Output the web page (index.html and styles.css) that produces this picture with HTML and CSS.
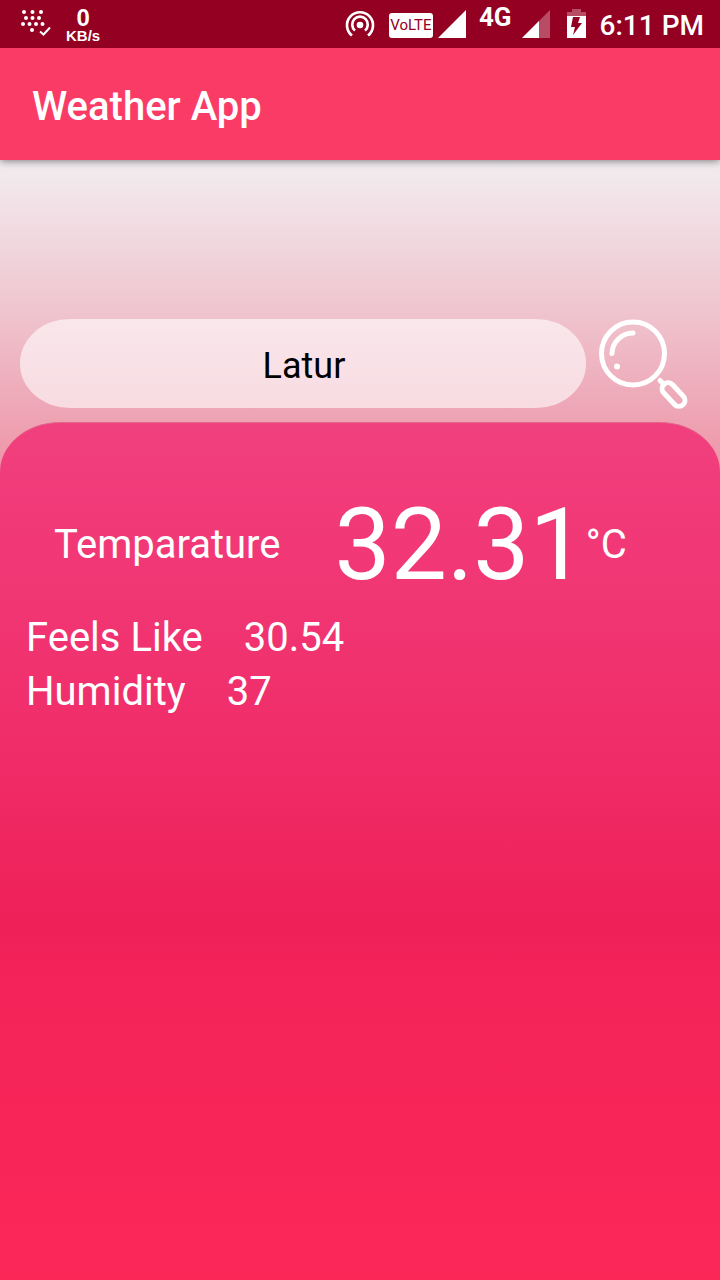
FILE: index.html
```html
<!DOCTYPE html>
<html lang="en">
<head>
<meta charset="utf-8">
<meta name="viewport" content="width=device-width, initial-scale=1">
<title>Weather App</title>
<link rel="stylesheet" href="styles.css">
</head>
<body>
<div class="status-bar">
  <div class="status-left">
    <svg class="icon" width="32" height="30" viewBox="0 0 32 30" aria-hidden="true">
      <g fill="#fff">
        <circle cx="4" cy="4" r="2"/><circle cx="12.500" cy="4" r="2"/><circle cx="21" cy="4" r="2"/>
        <circle cx="6" cy="10" r="2"/><circle cx="12.500" cy="10" r="2"/><circle cx="19" cy="10" r="2"/>
        <circle cx="3" cy="16" r="2"/><circle cx="9.500" cy="16" r="2"/><circle cx="16" cy="16" r="2"/><circle cx="22.500" cy="16" r="2"/>
        <circle cx="12" cy="22" r="2"/>
      </g>
      <path d="M20 23.500 23.500 26.500 30 19.500" fill="none" stroke="#fff" stroke-width="2"/>
    </svg>
    <div class="speed"><span class="speed-value">0</span><span class="speed-unit">KB/s</span></div>
  </div>
  <div class="status-right">
    <svg class="icon hotspot" width="30" height="28" viewBox="0 0 30 28" aria-hidden="true">
      <g fill="none" stroke="#fff" stroke-width="2.700">
        <path d="M7 25.500A13 13 0 1 1 23 25.500"/>
        <path d="M10 20.500A7.800 7.800 0 1 1 20 20.500"/>
      </g>
      <circle cx="15" cy="15" r="3.300" fill="#fff"/>
    </svg>
    <span class="volte">VoLTE</span>
    <svg class="icon signal" width="28" height="28" viewBox="0 0 28 28" aria-hidden="true"><path d="M0 28 28 0V28Z" fill="#fff"/></svg>
    <span class="network">4G</span>
    <svg class="icon signal" width="28" height="28" viewBox="0 0 28 28" aria-hidden="true"><path d="M0 28 28 0V28Z" fill="#b84c64"/><path d="M0 28 17 11V28Z" fill="#fff"/></svg>
    <svg class="icon battery" width="20" height="29" viewBox="0 0 20 29" aria-hidden="true"><path d="M5 0H14V3H19V7H0V3H5Z" fill="#b84c64"/><path d="M0 7H19V29H0Z" fill="#fff"/><path d="M6 8H13L11 14H15L6 26 8 18H4Z" fill="#930021"/></svg>
    <time class="clock">6:11 PM</time>
  </div>
</div>
<header class="app-bar"><h1 class="app-title">Weather App</h1></header>
<main class="content">
  <form class="search">
    <input class="search-input" type="text" value="Latur" aria-label="City">
    <button class="search-button" type="button" aria-label="Search">
      <svg width="92" height="92" viewBox="0 0 92 92" fill="none" stroke="#fff" stroke-width="5" stroke-linecap="round" aria-hidden="true">
        <circle cx="36" cy="36.500" r="31.500"/>
        <path d="M15 36.500A21 21 0 0 1 36 16"/>
        <circle cx="20" cy="49.500" r="3" fill="#fff" stroke="none"/>
        <path d="M63 63.500 67 67.500"/>
        <rect x="-6" y="-14" width="12" height="28" rx="6" transform="translate(76.500 77.500) rotate(-43)"/>
      </svg>
    </button>
  </form>
  <section class="card">
    <div class="temperature">
      <span class="label">Temparature</span>
      <span class="degrees">32.31</span>
      <span class="unit">°C</span>
    </div>
    <dl class="details">
      <div class="detail"><dt>Feels Like</dt><dd>30.54</dd></div>
      <div class="detail"><dt>Humidity</dt><dd>37</dd></div>
    </dl>
  </section>
</main>
</body>
</html>
```
FILE: styles.css
```css
* { box-sizing: border-box; }

body {
  margin: 0;
  min-height: 100vh;
  display: flex;
  flex-direction: column;
  font-family: Roboto, sans-serif;
  color: #fff;
}

svg { display: block; }

.status-bar {
  z-index: 2;
  display: flex;
  justify-content: space-between;
  height: 48px;
  padding: 0 16px 0 20px;
  background: #930021;
}

.status-left,
.status-right { display: flex; }

.status-left { gap: 14px; padding-top: 8px; }

.speed {
  display: flex;
  flex-direction: column;
  align-items: center;
  font-family: "Liberation Sans", sans-serif;
  font-weight: 700;
}

.speed-value { font-size: 24px; line-height: 20px; }

.speed-unit {
  font-size: 15px;
  line-height: 16px;
}

.status-right { align-items: flex-start; }
.hotspot { margin: 10px 14px 0 0; }

.volte {
  width: 44px;
  margin: 13px 5px 0 0;
  border-radius: 3px;
  background: #fff;
  color: #930021;
  font-size: 15px;
  line-height: 25px;
  text-align: center;
}

.signal { margin-top: 10px; }

.network {
  margin: 3px 10px 0 13px;
  font-size: 26px;
  line-height: 28px;
  font-weight: 700;
}

.battery { margin: 9px 13px 0 17px; }

.clock {
  margin-top: 9px;
  font-size: 28px;
  line-height: 34px;
  font-weight: 500;
}

.app-bar {
  z-index: 1;
  display: flex;
  align-items: center;
  height: 112px;
  padding: 6px 32px 0;
  background: #fa3b66;
  box-shadow: 0 1px 8px rgba(0, 0, 0, 0.5);
}

.app-title {
  margin: 0;
  font-size: 40px;
  line-height: 48px;
  font-weight: 500;
}

.content {
  flex: 1;
  display: flex;
  flex-direction: column;
  background: linear-gradient(#f2edf0 0, #efc5cf 150px, #eea3b3 260px, #ee8fa3 330px);
}

.search {
  display: flex;
  align-items: center;
  gap: 11px;
  padding: 157px 31px 13px 20px;
}

.search-input {
  flex: 1;
  min-width: 0;
  height: 89px;
  padding: 6px 0 0 2px;
  border: 0;
  border-radius: 50px / 44px;
  background: rgba(255, 255, 255, 0.6);
  color: #000;
  font-family: inherit;
  font-size: 36px;
  text-align: center;
}

.search-button {
  padding: 0;
  border: 0;
  background: none;
}

.card {
  flex: 1;
  padding: 64px 26px 24px;
  border-top: 1px solid #e3668a;
  border-radius: 60px 60px 0 0 / 50px 50px 0 0;
  background: linear-gradient(#f0407d 0, #f23a79 10%, #f0316e 30%, #ef2058 59%, #f4245a 66%, #fb2757 100%);
}

.temperature {
  display: flex;
  align-items: center;
  padding-left: 28px;
  font-size: 40px;
  line-height: 48px;
}

.degrees {
  margin: 0 0 0 54px;
  font-size: 100px;
  line-height: 116px;
}

.details {
  margin: 8px 0 0;
  font-size: 40px;
  line-height: 54px;
}

.detail { display: flex; gap: 41px; }
.detail dd { margin: 0; }
```
